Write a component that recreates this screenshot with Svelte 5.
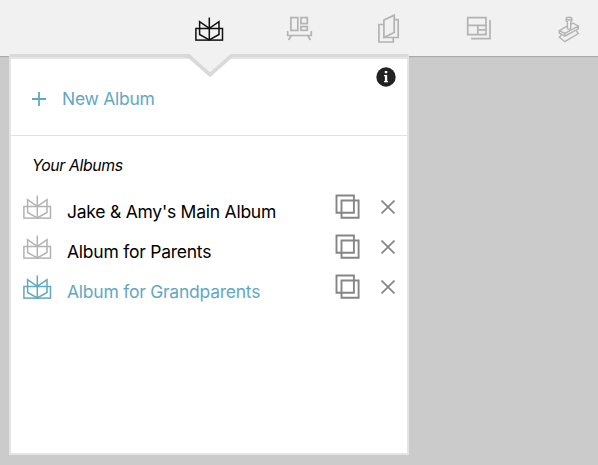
<script>
  let albums = $state([
    { id: 1, name: "Jake & Amy's Main Album" },
    { id: 2, name: 'Album for Parents' },
    { id: 3, name: 'Album for Grandparents' }
  ]);
  let selected = $state(3);

  function copyAlbum(album) {
    const id = Math.max(...albums.map((a) => a.id)) + 1;
    albums.push({ id, name: album.name });
  }

  function removeAlbum(id) {
    albums = albums.filter((a) => a.id !== id);
  }

  function newAlbum() {
    const id = Math.max(0, ...albums.map((a) => a.id)) + 1;
    albums.push({ id, name: 'New Album' });
    selected = id;
  }
</script>

{#snippet book(width)}
  <svg width="30" height="26" viewBox="0 0 30 26" fill="none" stroke="currentColor" stroke-width={width}>
    <rect x="1.9" y="12.5" width="26.6" height="11.6" />
    <path d="M15.3 1.5V24M5.6 5.6V18.5L15.3 24L25 18.5V5.6L15.3 12.4Z" />
  </svg>
{/snippet}

<nav class="toolbar">
  <button class="tool active" aria-label="Albums">{@render book(1.5)}</button>
  <button class="tool" aria-label="Displays">
    <svg width="30" height="30" viewBox="0 0 30 30">
      <rect x="6.9" y="4.6" width="6.9" height="12.8" />
      <rect x="16.9" y="4.6" width="6.4" height="6" />
      <rect x="16.9" y="13.6" width="6.4" height="3.7" />
      <path d="M3.7 18V22.5H27.3V18M7.3 22.5L4.6 27M23.7 22.5L26.4 27" />
    </svg>
  </button>
  <button class="tool" aria-label="Cards">
    <svg width="30" height="30" viewBox="0 0 30 30">
      <path d="M9.9 11.5H4.9V29H19.3V24.5" />
      <path d="M9.9 7L20.2 2.2V19.4L9.9 24.5ZM20.2 6.6H24.2V24.5H9.9" />
    </svg>
  </button>
  <button class="tool" aria-label="Prints">
    <svg width="30" height="30" viewBox="0 0 30 30">
      <path d="M3.7 4.6H22V21.6H3.7ZM3.7 12.4H22M13.8 12.4V21.6M13.8 16.9H22" />
      <path d="M26 7V25.7H7" />
    </svg>
  </button>
  <button class="tool" aria-label="Stamps">
    <svg class="stamp" width="30" height="30" viewBox="0 0 30 30">
      <ellipse cx="15" cy="5.6" rx="2.8" ry="1.4" />
      <path d="M12.2 5.7V7.4C12.2 8.4 13.4 8.8 13.4 8.8V15.2C13.4 16.7 16.7 16.7 16.7 15.2V8.8C16.7 8.8 17.8 8.4 17.8 7.4V5.7" />
      <path d="M13.4 12.8L5.3 17.6L10.8 20.4L24.3 13L19 10.2L16.7 11.2M5.3 17.6V20.2L10.8 23.2L24.3 15.9V13M10.8 20.4V23.2M7.2 22.2L5.3 24.2L10.8 28.7L24.3 20.6L22.5 18" />
    </svg>
  </button>
</nav>

<section class="panel">
  <svg class="pointer" width="50" height="26" viewBox="0 0 50 26">
    <path class="fill" d="M4 0V1L25 21L46 1V0Z" />
    <path class="edge" d="M0 1.9H3.7L25 20.8L46.3 1.9H48" />
  </svg>
  <header>
    <button class="new" onclick={newAlbum}>
      <svg width="14" height="14" viewBox="0 0 14 14"><path d="M7 0V14M0 7H14" /></svg>
      <span>New Album</span>
    </button>
    <svg class="info" width="20" height="20" viewBox="0 0 20 20">
      <circle cx="10" cy="10" r="9.7" />
      <path d="M8.8 4H11.2V6.2H8.8ZM8 8H11.2V14H12.1V15.2H8V14H8.9V9.2H8Z" />
    </svg>
  </header>
  <h2>Your Albums</h2>
  <ul>
    {#each albums as album (album.id)}
      <li class:selected={album.id === selected}>
        <button class="album" onclick={() => (selected = album.id)}>
          {@render book(1.5)}
          <span>{album.name}</span>
        </button>
        <button class="copy" aria-label="Duplicate" onclick={() => copyAlbum(album)}>
          <svg width="26" height="26" viewBox="0 0 26 26">
            <path d="M1.5 1.5H18.9V18.8H1.5ZM6.5 6.5H23.6V23.8H6.5Z" />
          </svg>
        </button>
        <button class="remove" aria-label="Delete" onclick={() => removeAlbum(album.id)}>
          <svg width="14" height="14" viewBox="0 0 14 14"><path d="M.5 .5L13.5 13.5M13.5 .5L.5 13.5" /></svg>
        </button>
      </li>
    {/each}
  </ul>
</section>

<style>
  :global(body) {
    background: #cbcbcb;
    overflow: hidden;
    font-family: Inter, 'Liberation Sans', sans-serif;
  }
  button {
    background: none;
    border: none;
    padding: 0;
    font: inherit;
    color: inherit;
    cursor: pointer;
  }
  svg {
    display: block;
    flex: none;
  }
  .toolbar {
    display: flex;
    height: 56px;
    padding-left: 164px;
    background: #f1f1f1;
    box-shadow: 0 1px 1px #aaa;
    box-sizing: border-box;
  }
  .tool {
    flex: none;
    display: flex;
    justify-content: center;
    align-items: flex-start;
    width: 90px;
    padding-top: 13px;
    color: #b3b3b3;
  }
  .tool.active {
    padding-top: 16px;
    color: #111;
  }
  .tool:not(.active) svg {
    fill: none;
    stroke: currentColor;
    stroke-width: 1.7;
  }
  .tool:not(.active) .stamp {
    stroke-width: 1.4;
  }
  .panel {
    position: relative;
    width: 400px;
    height: 401px;
    margin: -2px 0 0 9px;
    box-sizing: border-box;
    background: #fff;
    border: 2px solid #e4e4e4;
    border-top: 3px solid #d9d9d9;
    border-radius: 2px 2px 0 0;
  }
  .pointer {
    position: absolute;
    top: -3px;
    left: 174px;
  }
  .pointer .fill {
    fill: #f1f1f1;
  }
  .pointer .edge {
    fill: none;
    stroke: #d9d9d9;
    stroke-width: 3.8;
  }
  header {
    display: flex;
    justify-content: space-between;
    height: 79px;
    padding: 0 11px 0 21px;
    box-sizing: border-box;
    border-top: 2px solid #e5e5e5;
    border-bottom: 1px solid #e2e2e2;
  }
  .new {
    display: flex;
    align-items: center;
    gap: 16px;
    padding-top: 4px;
    color: #5fa8c3;
    font-size: 17.5px;
    letter-spacing: -0.28px;
  }
  .new span {
    padding-bottom: 1px;
  }
  .new svg {
    fill: none;
    stroke: currentColor;
    stroke-width: 1.8;
  }
  .info {
    margin-top: 8px;
    fill: #222;
  }
  .info path {
    fill: #fff;
  }
  h2 {
    margin: 20px 0 0 21px;
    font-size: 15.8px;
    line-height: 20px;
    font-weight: 400;
    font-style: italic;
    letter-spacing: -0.36px;
  }
  ul {
    list-style: none;
    margin: 11px 0 0;
    padding: 0;
  }
  li {
    display: flex;
    align-items: center;
    height: 40px;
    padding: 0 12px 0 11px;
  }
  .album {
    flex: 1;
    display: flex;
    align-items: center;
    gap: 15px;
    font-size: 17.5px;
    letter-spacing: -0.24px;
    white-space: nowrap;
  }
  .album svg {
    color: #b3b3b3;
  }
  .album span {
    padding-top: 8px;
  }
  .selected .album,
  .selected .album svg {
    color: #5fa8c3;
  }
  .copy {
    margin-right: 20px;
  }
  .copy svg,
  .remove svg {
    fill: none;
    stroke: #858585;
    stroke-width: 1.9;
  }
  .remove svg {
    stroke-width: 1.7;
  }
</style>
